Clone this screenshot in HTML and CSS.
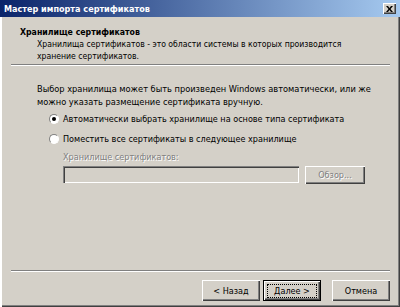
FILE: index.html
```html
<!DOCTYPE html>
<html lang="ru">
<head>
    <meta charset="UTF-8">
    <title>Мастер импорта сертификатов</title>
    <link rel="stylesheet" href="styles.css">
</head>
<body>

<div class="window">
    <div class="titlebar">
        <span class="title">Мастер импорта сертификатов</span>
        <span class="close">
            <svg width="7" height="6" viewBox="0 0 7 6"><path d="M0 0h2l1.5 2L5 0h2L4.5 3 7 6H5L3.5 4 2 6H0l2.5-3z" fill="#000"/></svg>
        </span>
    </div>
    <div class="client">
        <div class="header">
            <div class="header-title">Хранилище сертификатов</div>
            <div class="header-sub">Хранилища сертификатов - это области системы в которых производится<br>хранение сертификатов.</div>
        </div>
        <div class="sep"></div>

        <div class="content">
            <p class="intro">Выбор хранилища может быть произведен Windows автоматически, или же<br>можно указать размещение сертификата вручную.</p>
            <div class="radio-row"><span class="radio checked"></span>Автоматически выбрать хранилище на основе типа сертификата</div>
            <div class="radio-row"><span class="radio"></span>Поместить все сертификаты в следующее хранилище</div>
            <div class="store">
                <div class="store-label disabled">Хранилище сертификатов:</div>
                <div class="store-row">
                    <div class="field"></div>
                    <div class="btn browse disabled">Обзор...</div>
                </div>
            </div>
        </div>

        <div class="sep bottom-sep"></div>
        <div class="buttons">
            <div class="btn">&lt; Назад</div>
            <div class="btn default"><span class="focus">Далее &gt;</span></div>
            <div class="btn cancel">Отмена</div>
        </div>
    </div>
</div>

</body>
</html>
```

FILE: styles.css
```css
body { margin: 0; padding: 0; background: #d4d0c8; font-family: "DejaVu Sans Condensed", "DejaVu Sans", sans-serif; font-size: 9px; color: #000; }
.window { width: 400px; height: 307px; display: flex; flex-direction: column; background: #d4d0c8; box-sizing: border-box;
    box-shadow: inset 2px 0 #fff, inset -1px -1px #404040, inset -2px -2px #808080; overflow: hidden; }
.titlebar { height: 17px; display: flex; align-items: center; justify-content: space-between; padding: 0 4px 0 4px;
    background: linear-gradient(to right, #0a246a, #a6caf0); }
.title { color: #fff; font-weight: bold; font-size: 9px; }
.close { width: 13px; height: 11px; box-sizing: border-box; display: flex; align-items: center; justify-content: center; background: #d4d0c8;
    box-shadow: inset 1px 1px #fff, inset -1px -1px #404040, inset -2px -2px #808080; }
.client { flex: 1; display: flex; flex-direction: column; padding-bottom: 6px; }
.header { padding: 9px 0 0 20px; }
.header-title { font-weight: bold; line-height: 12px; font-size: 8.7px; }
.header-sub { margin-left: 17px; line-height: 12px; font-size: 8.6px; }
.sep { margin: 2px 10px 0 11px; height: 0; border-top: 1px solid #808080; border-bottom: 1px solid #fff; }
.content { padding-left: 37px; }
.intro { margin: 16px 0 0 0; line-height: 13px; font-size: 9.2px; }
.radio-row { display: flex; align-items: center; height: 14px; margin: 4px 0 6px 12px; }
.radio { width: 10px; height: 10px; box-sizing: border-box; border-radius: 50%; background: #fff; margin-right: 4px; position: relative;
    border: 1px solid; border-color: #808080 #fff #fff #808080; }
.radio.checked::after { content: ""; position: absolute; left: 2px; top: 2px; width: 4px; height: 4px; border-radius: 50%; background: #000; }
.store { padding-left: 26px; margin-top: -1px; }
.store-label { line-height: 12px; }
.disabled { color: #808080; text-shadow: 1px 1px #fff; }
.store-row { display: flex; gap: 6px; margin-top: 3px; }
.field { width: 236px; height: 17px; box-sizing: border-box; background: #d4d0c8;
    box-shadow: inset 1px 1px #808080, inset 2px 2px #404040, inset -1px -1px #fff; }
.btn { width: 58px; height: 21px; box-sizing: border-box; display: flex; align-items: center; justify-content: center;
    box-shadow: inset 1px 1px #fff, inset -1px -1px #404040, inset -2px -2px #808080; }
.browse { width: 60px; height: 18px; }
.bottom-sep { margin-top: auto; }
.buttons { display: flex; justify-content: flex-end; gap: 3px; padding: 8px 10px 0 0; }
.btn.default { box-shadow: inset 0 0 0 1px #000, inset 2px 2px #fff, inset -2px -2px #404040, inset -3px -3px #808080; }
.focus { padding: 1px 6px; outline: 1px dotted #000; }
.btn.cancel { margin-left: 8px; }
```
